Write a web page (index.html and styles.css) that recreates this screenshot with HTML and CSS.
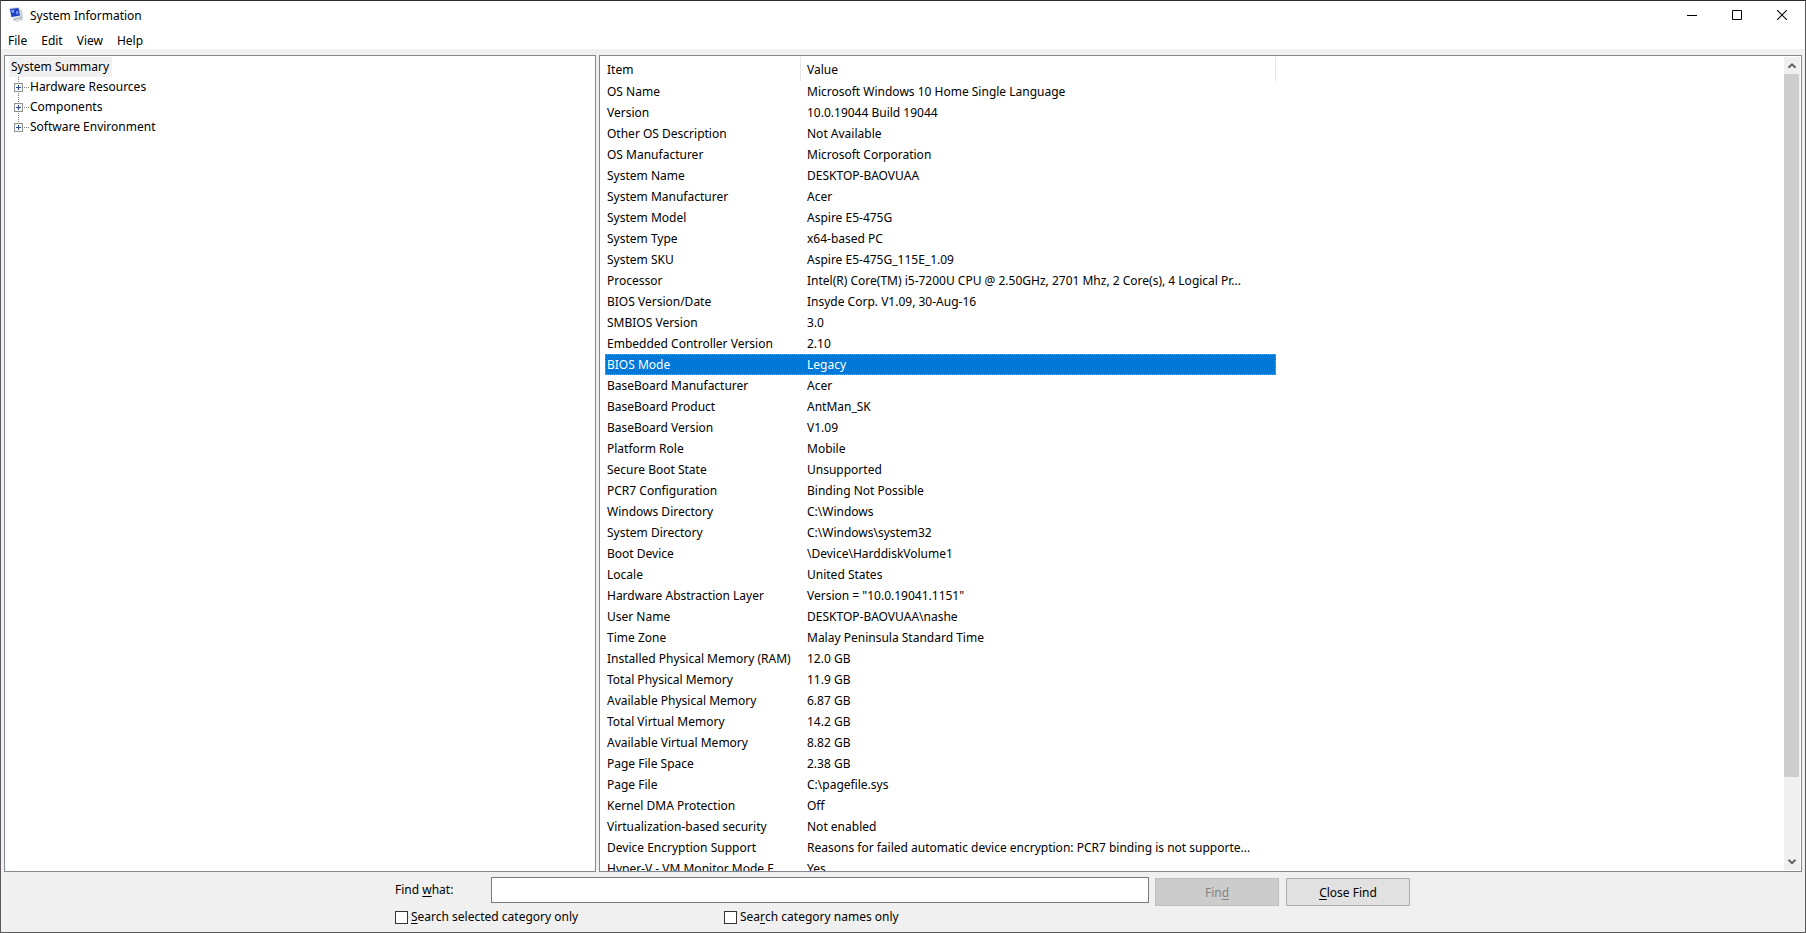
FILE: index.html
```html
<!DOCTYPE html>
<html lang="en">
<head>
<meta charset="utf-8">
<title>System Information</title>
<link rel="stylesheet" href="styles.css">
</head>
<body>
<div class="window">
  <header class="titlebar">
    <svg class="app-icon" width="16" height="16" viewBox="0 0 16 16">
      <path d="M9 2l4 1 1 8-4 2z" fill="#c9cdd2"/>
      <path d="M5 11l7-1 2 3-6 2-4-2z" fill="#b9bdc4"/>
      <path d="M6 13l6-1 1 1-5 2z" fill="#e8eaec"/>
      <path d="M0 1l10-1 2 9-10 2z" fill="#d5dbea"/>
      <path d="M1 2l8.500-1 1.500 7.500-8.500 1.500z" fill="#1d3fc0"/>
      <path d="M2 3l3-.5.5 3L3 6zM7 4l2 0 .5 3-2 .5z" fill="#7c9cf0"/>
    </svg>
    <h1 class="title">System Information</h1>
    <div class="controls">
      <svg width="10" height="10" viewBox="0 0 10 10"><path d="M0 5.500h10" stroke="#000"/></svg>
      <svg width="10" height="10" viewBox="0 0 10 10"><path d="M.5.5h9v9h-9z" fill="none" stroke="#000"/></svg>
      <svg width="10" height="10" viewBox="0 0 10 10"><path d="M0 0l10 10M10 0L0 10" stroke="#000" stroke-width="1.100"/></svg>
    </div>
  </header>
  <nav class="menu"><span>File</span><span>Edit</span><span>View</span><span>Help</span></nav>
  <main class="panes">
    <section class="pane tree">
      <div class="root"><span>System Summary</span></div>
      <div class="node"><i class="expander"></i><span>Hardware Resources</span></div>
      <div class="node"><i class="expander"></i><span>Components</span></div>
      <div class="node last"><i class="expander"></i><span>Software Environment</span></div>
    </section>
    <section class="pane details">
      <div class="list">
        <div class="row head"><span>Item</span><span>Value</span></div>
        <div class="row"><span>OS Name</span><span>Microsoft Windows 10 Home Single Language</span></div>
        <div class="row"><span>Version</span><span>10.0.19044 Build 19044</span></div>
        <div class="row"><span>Other OS Description</span><span>Not Available</span></div>
        <div class="row"><span>OS Manufacturer</span><span>Microsoft Corporation</span></div>
        <div class="row"><span>System Name</span><span>DESKTOP-BAOVUAA</span></div>
        <div class="row"><span>System Manufacturer</span><span>Acer</span></div>
        <div class="row"><span>System Model</span><span>Aspire E5-475G</span></div>
        <div class="row"><span>System Type</span><span>x64-based PC</span></div>
        <div class="row"><span>System SKU</span><span>Aspire E5-475G_115E_1.09</span></div>
        <div class="row"><span>Processor</span><span>Intel(R) Core(TM) i5-7200U CPU @ 2.50GHz, 2701 Mhz, 2 Core(s), 4 Logical Pr...</span></div>
        <div class="row"><span>BIOS Version/Date</span><span>Insyde Corp. V1.09, 30-Aug-16</span></div>
        <div class="row"><span>SMBIOS Version</span><span>3.0</span></div>
        <div class="row"><span>Embedded Controller Version</span><span>2.10</span></div>
        <div class="row selected"><span>BIOS Mode</span><span>Legacy</span></div>
        <div class="row"><span>BaseBoard Manufacturer</span><span>Acer</span></div>
        <div class="row"><span>BaseBoard Product</span><span>AntMan_SK</span></div>
        <div class="row"><span>BaseBoard Version</span><span>V1.09</span></div>
        <div class="row"><span>Platform Role</span><span>Mobile</span></div>
        <div class="row"><span>Secure Boot State</span><span>Unsupported</span></div>
        <div class="row"><span>PCR7 Configuration</span><span>Binding Not Possible</span></div>
        <div class="row"><span>Windows Directory</span><span>C:\Windows</span></div>
        <div class="row"><span>System Directory</span><span>C:\Windows\system32</span></div>
        <div class="row"><span>Boot Device</span><span>\Device\HarddiskVolume1</span></div>
        <div class="row"><span>Locale</span><span>United States</span></div>
        <div class="row"><span>Hardware Abstraction Layer</span><span>Version = "10.0.19041.1151"</span></div>
        <div class="row"><span>User Name</span><span>DESKTOP-BAOVUAA\nashe</span></div>
        <div class="row"><span>Time Zone</span><span>Malay Peninsula Standard Time</span></div>
        <div class="row"><span>Installed Physical Memory (RAM)</span><span>12.0 GB</span></div>
        <div class="row"><span>Total Physical Memory</span><span>11.9 GB</span></div>
        <div class="row"><span>Available Physical Memory</span><span>6.87 GB</span></div>
        <div class="row"><span>Total Virtual Memory</span><span>14.2 GB</span></div>
        <div class="row"><span>Available Virtual Memory</span><span>8.82 GB</span></div>
        <div class="row"><span>Page File Space</span><span>2.38 GB</span></div>
        <div class="row"><span>Page File</span><span>C:\pagefile.sys</span></div>
        <div class="row"><span>Kernel DMA Protection</span><span>Off</span></div>
        <div class="row"><span>Virtualization-based security</span><span>Not enabled</span></div>
        <div class="row"><span>Device Encryption Support</span><span>Reasons for failed automatic device encryption: PCR7 binding is not supporte...</span></div>
        <div class="row"><span>Hyper-V - VM Monitor Mode E...</span><span>Yes</span></div>
      </div>
      <div class="scrollbar">
        <svg width="16" height="17" viewBox="0 0 16 17"><path d="M4.500 10.800L8 7.300l3.500 3.500" fill="none" stroke="#606060" stroke-width="2"/></svg>
        <div class="thumb"></div>
        <svg class="down" width="16" height="17" viewBox="0 0 16 17"><path d="M4.500 6.700L8 10.200l3.500-3.500" fill="none" stroke="#606060" stroke-width="2"/></svg>
      </div>
    </section>
  </main>
  <footer class="find">
    <div class="find-row">
      <label class="find-label">Find <u>w</u>hat:</label>
      <div class="field"></div>
      <div class="button disabled">Fin<u>d</u></div>
      <div class="button"><u>C</u>lose Find</div>
    </div>
    <div class="options">
      <label><i class="box"></i><u>S</u>earch selected category only</label>
      <label><i class="box"></i>Sea<u>r</u>ch category names only</label>
    </div>
  </footer>
</div>
</body>
</html>
```

FILE: styles.css
```css
* { box-sizing: border-box; }
body { margin: 0; overflow: hidden; font: 12px/20px "Noto Sans", "Open Sans", sans-serif; color: #000; }
.window { width: 1806px; height: 933px; display: flex; flex-direction: column; background: #f0f0f0; border: 1px solid #5c5a5c; border-top-color: #2d2b2e; }
.titlebar { height: 30px; flex: none; display: flex; align-items: flex-start; background: #fff; padding-left: 8px; }
.app-icon { margin: 6px 5px 0 0; }
.title { margin: 5px 0 0; font: inherit; flex: 1; }
.controls { display: flex; gap: 35px; padding: 9px 18px 0 0; }
.controls svg { display: block; }
.menu { height: 18px; flex: none; background: #fff; display: flex; gap: 14px; padding-left: 7px; }
.panes { height: 823px; flex: none; display: flex; gap: 3px; padding: 6px 3px 0; }
.pane { background: #fff; border: 1px solid #828790; overflow: hidden; }
.tree { width: 592px; flex: none; padding: 1px 4px; }
.root { height: 20px; }
.root span { display: inline-block; width: 103px; height: 20px; padding-left: 2px; background: #f0f0f0; white-space: nowrap; }
.node { height: 20px; display: flex; align-items: center; padding-left: 5px; background: repeating-linear-gradient(180deg, #808080 0 1px, transparent 1px 2px) 9px 0 / 1px 20px no-repeat; }
.node.last { background-size: 1px 10px; }
.node span { margin-left: 7px; }
.expander { width: 9px; height: 9px; border: 1px solid #919191; background: linear-gradient(#2c4a90, #2c4a90) 1px 3px / 5px 1px no-repeat, linear-gradient(#2c4a90, #2c4a90) 3px 1px / 1px 5px no-repeat, #f6f6f6; }
.node .expander + span { position: relative; }
.node .expander + span::before { content: ""; position: absolute; left: -6px; top: 10px; width: 5px; border-top: 1px dotted #808080; }
.details { width: 1203px; flex: none; display: flex; justify-content: space-between; }
.list { width: 676px; padding-left: 5px; }
.row { height: 21px; display: flex; line-height: 21px; white-space: nowrap; }
.row span:first-child { width: 195px; flex: none; padding-left: 2px; overflow: hidden; text-overflow: clip; }
.row span:last-child { margin-left: 7px; }
.head { height: 25px; padding-top: 1px; line-height: 25px; background: linear-gradient(#e5e5e5, #e5e5e5) 195px 1px / 1px 24px no-repeat, linear-gradient(#e5e5e5, #e5e5e5) 670px 1px / 1px 24px no-repeat; }
.selected { background: #0078d7; color: #fff; outline: 1px dotted #ff8728; outline-offset: -1px; }
.scrollbar { width: 16px; height: 813px; margin: 1px 1px 0 0; background: #f0f0f0; display: flex; flex-direction: column; }
.scrollbar svg { display: block; }
.thumb { width: 15px; height: 703px; background: #cdcdcd; }
.down { margin-top: auto; }
.find { padding: 5px 0 0 394px; }
.find-row { display: flex; align-items: flex-start; }
.find-label { width: 96px; padding-top: 3px; }
.field { width: 658px; height: 26px; border: 1px solid #7a7a7a; background: #fff; margin-right: 6px; }
.button { width: 124px; height: 28px; margin: 1px 7px 0 0; border: 1px solid #adadad; background: #e1e1e1; text-align: center; line-height: 27px; }
.disabled { color: #838383; background: #ccc; border-color: #bfbfbf; }
.options { display: flex; padding-top: 1px; }
.options label { display: flex; align-items: center; width: 329px; }
.box { width: 13px; height: 13px; border: 1px solid #333; background: #fff; margin-right: 3px; }
u { text-underline-offset: 2px; text-decoration-thickness: 1px; }
```
